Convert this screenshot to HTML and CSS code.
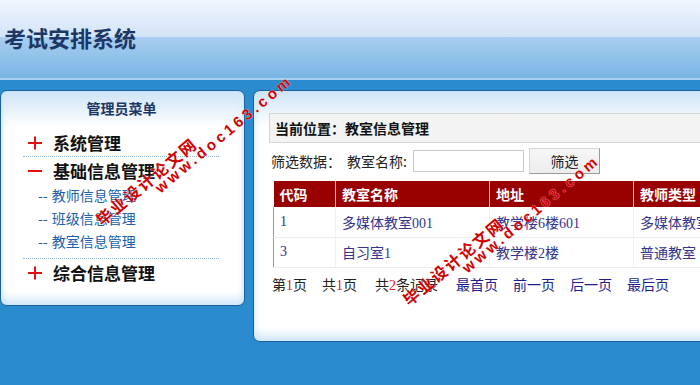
FILE: index.html
```html
<!DOCTYPE html>
<html lang="zh-CN">
<head>
<meta charset="utf-8">
<title>考试安排系统</title>
<link rel="stylesheet" href="styles.css">
</head>
<body>
<header class="top">
  <h1 class="title">考试安排系统</h1>
</header>
<div class="main">
  <aside class="menu">
    <div class="menu-title">管理员菜单</div>
    <ul class="menu-list">
      <li class="menu-item">
        <div class="menu-head">
          <svg class="ico" viewBox="0 0 14 14" width="14" height="14"><path d="M0 7H14M7 0.5V13.5" stroke="#e01010" stroke-width="2" fill="none"/></svg>
          <span>系统管理</span>
        </div>
      </li>
      <li class="menu-item">
        <div class="menu-head">
          <svg class="ico" viewBox="0 0 14 14" width="14" height="14"><path d="M0 7H14" stroke="#e01010" stroke-width="2" fill="none"/></svg>
          <span>基础信息管理</span>
        </div>
        <ul class="sub">
          <li><span class="dash">--</span>教师信息管理</li>
          <li><span class="dash">--</span>班级信息管理</li>
          <li><span class="dash">--</span>教室信息管理</li>
        </ul>
      </li>
      <li class="menu-item">
        <div class="menu-head">
          <svg class="ico" viewBox="0 0 14 14" width="14" height="14"><path d="M0 7H14M7 0.5V13.5" stroke="#e01010" stroke-width="2" fill="none"/></svg>
          <span>综合信息管理</span>
        </div>
      </li>
    </ul>
  </aside>
  <section class="content">
    <div class="crumb">当前位置：教室信息管理</div>
    <div class="filter">
      <span class="lbl">筛选数据：</span>
      <span class="lbl2">教室名称:</span>
      <input class="field" type="text">
      <button class="btn" type="button">筛选</button>
    </div>
    <table class="grid">
      <thead>
        <tr><th class="c1">代码</th><th class="c2">教室名称</th><th class="c3">地址</th><th class="c4">教师类型</th></tr>
      </thead>
      <tbody>
        <tr><td>1</td><td>多媒体教室001</td><td>教学楼6楼601</td><td>多媒体教室</td></tr>
        <tr><td>3</td><td>自习室1</td><td>教学楼2楼</td><td>普通教室</td></tr>
      </tbody>
    </table>
    <div class="pager">
      <span>第<em>1</em>页</span>
      <span>共<em>1</em>页</span>
      <span class="wide">共<em>2</em>条记录</span>
      <a class="wide">最首页</a>
      <a>前一页</a>
      <a>后一页</a>
      <a>最后页</a>
    </div>
  </section>
</div>
<div class="watermark" aria-hidden="true">
  <span class="wm-cn wm-a">毕业设计论文网</span>
  <span class="wm-url wm-a2">www.doc163.com</span>
  <span class="wm-cn wm-b">毕业设计论文网</span>
  <span class="wm-url wm-b2">www.doc163.com</span>
</div>
</body>
</html>
```

FILE: styles.css
```css
* { box-sizing: border-box; }

body {
  margin: 0;
  width: 700px;
  height: 385px;
  overflow: hidden;
  position: relative;
  background: #2a8ccf;
  font-family: "Noto Sans CJK SC", sans-serif;
  font-size: 14px;
  color: #111;
}

.top {
  height: 80px;
  padding: 22px 0 0 4px;
  background: linear-gradient(to bottom,
    #f1f5fd 0, #d2e4f7 37px,
    #a9cdef 37px, #79b6e5 78px,
    #a9d0f0 78px, #a9d0f0 80px);
}

.title {
  margin: 0;
  font-size: 22px;
  line-height: 30px;
  font-weight: bold;
  color: #1c3766;
}

.main {
  display: flex;
  align-items: flex-start;
  gap: 8px;
  padding-top: 10px;
}

.menu, .content {
  border: 1px solid #1b5f9e;
  border-radius: 7px;
  background: linear-gradient(to bottom, #cde4f7 0, #ffffff 36px);
  box-shadow:
    inset 0 -12px 10px -6px #cfe6f8,
    inset 5px 0 6px -4px #cfe6f8,
    inset -5px 0 6px -4px #cfe6f8;
}

.menu {
  flex: 0 0 245px;
  height: 216px;
  padding-top: 7px;
}

.menu-title {
  text-align: center;
  font-size: 14px;
  line-height: 20px;
  font-weight: bold;
  color: #1c3766;
  padding-right: 2px;
}

.menu-list {
  list-style: none;
  margin: 11px 0 0 22px;
  padding: 0;
  width: 196px;
}

.menu-item {
  border-bottom: 1px dotted #8fb7d8;
}
.menu-item:last-child { border-bottom: 0; }

.menu-head {
  display: flex;
  align-items: center;
  height: 27px;
  padding-left: 5px;
  font-size: 17px;
  font-weight: bold;
  color: #111;
}

.ico { flex: 0 0 14px; margin-right: 11px; }

.sub {
  list-style: none;
  margin: 0;
  padding: 0 0 5px 15px;
}
.sub li {
  line-height: 23px;
  font-size: 14px;
  color: #2060a8;
}
.dash { margin-right: 4px; color: #2a5a9a; }

.content {
  flex: 0 0 470px;
  height: 252px;
  padding: 22px 0 0 15px;
}

.crumb {
  height: 30px;
  padding-left: 5px;
  line-height: 28px;
  background: #f3f3f3;
  border: 1px solid #d4d4d4;
  font-weight: bold;
  font-size: 14px;
  color: #111;
}

.filter {
  display: flex;
  align-items: center;
  height: 26px;
  margin-top: 5px;
  padding-left: 2px;
  color: #222;
}
.lbl { margin-right: 6px; }
.lbl2 { margin-right: 6px; }

.field {
  width: 111px;
  height: 22px;
  margin: 0 5px 0 0;
  border: 1px solid #c9c9c9;
  background: #fff;
}

.btn {
  width: 71px;
  height: 26px;
  margin: 0;
  padding: 0;
  font-family: inherit;
  font-size: 14px;
  color: #222;
  background: linear-gradient(#f7f7f7, #ececec);
  border: 1px solid #d4d4d4;
  border-right-color: #9a9a9a;
  border-bottom-color: #9a9a9a;
}

.grid {
  margin: 7px 0 0 4px;
  border-collapse: collapse;
  font-size: 14px;
  width: 460px;
  table-layout: fixed;
}
.c1 { width: 62px; }
.c2 { width: 154px; }
.c3 { width: 144px; }

.grid th {
  height: 26px;
  padding: 0 0 0 6px;
  background: #990000;
  color: #fff;
  font-weight: bold;
  text-align: left;
  border-left: 1px solid #e8c4c4;
  white-space: nowrap;
}
.grid th:first-child { border-left: 0; }

.grid td {
  height: 30px;
  padding: 0 0 0 6px;
  color: #34348a;
  font-family: "Liberation Serif", "Noto Sans CJK SC", serif;
  border-bottom: 1px solid #ececec;
  border-left: 1px solid #f2f2f2;
  white-space: nowrap;
}
.grid td:first-child { border-left: 1px solid #8a9cb4; }

.pager {
  display: flex;
  gap: 15px;
  margin: 6px 0 0 3px;
  line-height: 20px;
  color: #222;
}
.pager em {
  font-style: normal;
  color: #e02020;
  font-family: "Liberation Serif", serif;
}
.pager a { color: #1c1c8c; text-decoration: none; }
.pager .wide { margin-left: 3px; }

.watermark {
  position: absolute;
  left: 0;
  top: 0;
  width: 700px;
  height: 385px;
  pointer-events: none;
}
.wm-cn, .wm-url {
  position: absolute;
  white-space: nowrap;
  color: #d20000;
  font-weight: bold;
  transform: translate(-50%, -50%) rotate(-40deg);
  text-shadow: 0 0 1px #fff;
}
.wm-cn {
  font-size: 16px;
  letter-spacing: 2px;
  line-height: 18px;
}
.wm-url {
  font-family: "Liberation Sans", Arial, sans-serif;
  font-size: 15px;
  letter-spacing: 3.5px;
  line-height: 16px;
}
.wm-a { left: 146px; top: 181px; }
.wm-a2 { left: 224px; top: 134px; }
.wm-b { left: 453px; top: 261px; }
.wm-b2 { left: 531px; top: 214px; }
```
